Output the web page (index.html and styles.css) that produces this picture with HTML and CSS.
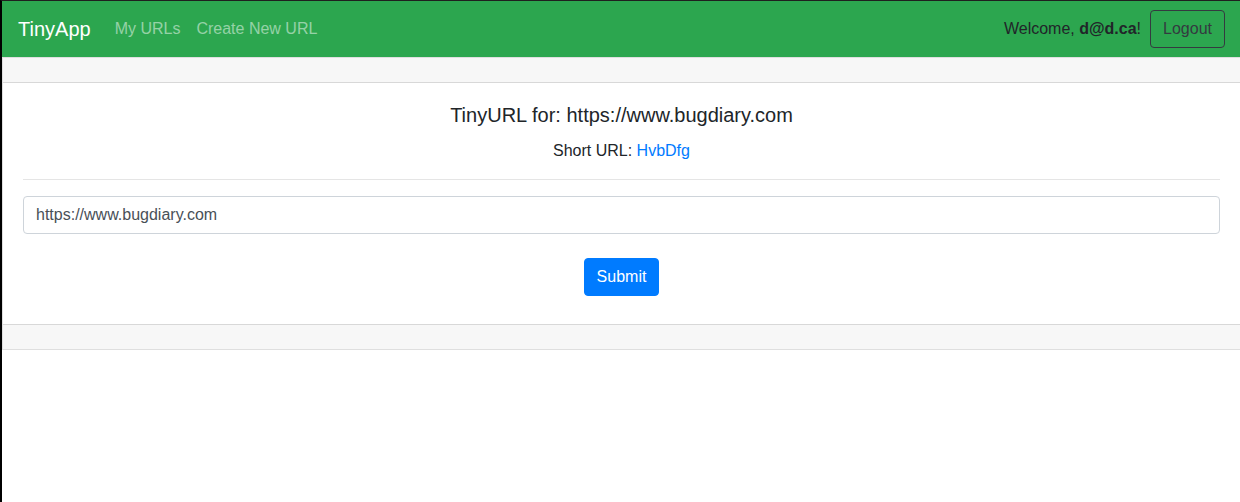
FILE: index.html
```html
<!DOCTYPE html>
<html>
<head>
<meta charset="utf-8">
<title>TinyApp</title>
<link rel="stylesheet" href="styles.css">
</head>
<body>
<nav class="navbar">
  <a class="brand" href="#">TinyApp</a>
  <div class="nav-links">
    <a class="nav-link" href="#">My URLs</a>
    <a class="nav-link" href="#">Create New URL</a>
  </div>
  <div class="nav-right">
    <span class="welcome">Welcome, <b>d@d.ca</b>!</span>
    <button class="btn-outline">Logout</button>
  </div>
</nav>
<main class="card">
  <div class="card-header"></div>
  <div class="card-body">
    <h5 class="card-title">TinyURL for: https://www.bugdiary.com</h5>
    <p class="card-text">Short URL: <a href="#">HvbDfg</a></p>
    <hr class="divider">
    <form class="edit-form">
      <div class="form-group">
        <input class="form-control" type="text" value="https://www.bugdiary.com">
      </div>
      <div class="submit-row">
        <button class="btn-primary" type="submit">Submit</button>
      </div>
    </form>
  </div>
  <div class="card-footer"></div>
</main>
</body>
</html>
```
FILE: styles.css
```css
* { box-sizing: border-box; }
html { height: 100%; overflow: hidden; }
body {
  margin: 0;
  width: 1241px;
  min-height: 100%;
  font-family: "Liberation Sans", Arial, sans-serif;
  font-size: 16px;
  line-height: 1.5;
  color: #212529;
  background: #fff;
  border-left: 2px solid #000;
  border-top: 1px solid #1f1f1f;
}
.navbar {
  display: flex;
  align-items: center;
  height: 56px;
  padding: 0 16px;
  background: #2ca64f;
}
.brand {
  font-size: 20px;
  line-height: 30px;
  color: #fff;
  text-decoration: none;
  margin-right: 16px;
}
.nav-links { display: flex; }
.nav-link {
  padding: 8px;
  color: rgba(255,255,255,.5);
  text-decoration: none;
}
.nav-right {
  margin-left: auto;
  display: flex;
  align-items: center;
}
.welcome { margin-right: 9px; color: #212529; }
.welcome b { font-weight: 700; }
.btn-outline {
  font-family: inherit;
  font-size: 16px;
  line-height: 24px;
  padding: 6px 12px;
  height: 38px;
  background: transparent;
  color: #343a40;
  border: 1px solid #343a40;
  border-radius: 4px;
}
.card {
  display: block;
  border: 1px solid rgba(0,0,0,.125);
  background: #fff;
}
.card-header {
  height: 25px;
  background: rgba(0,0,0,.03);
  border-bottom: 1px solid rgba(0,0,0,.125);
}
.card-body {
  padding: 20px;
  text-align: center;
}
.card-title {
  margin: 0 0 12px;
  font-size: 20px;
  font-weight: 500;
  line-height: 24px;
}
.card-text { margin: 0 0 16px; }
.card-text a { color: #007bff; text-decoration: none; }
.divider {
  margin: 16px 0;
  border: 0;
  border-top: 1px solid rgba(0,0,0,.1);
}
.edit-form { margin: 0; }
.form-group { margin-bottom: 16px; }
.form-control {
  display: block;
  width: 100%;
  height: 38px;
  padding: 6px 12px;
  font-family: inherit;
  font-size: 16px;
  line-height: 24px;
  color: #495057;
  border: 1px solid #ced4da;
  border-radius: 4px;
  background: #fff;
}
.submit-row { padding: 8px 0; }
.btn-primary {
  font-family: inherit;
  font-size: 16px;
  line-height: 24px;
  height: 38px;
  padding: 6px 12px;
  color: #fff;
  background: #007bff;
  border: 1px solid #007bff;
  border-radius: 4px;
}
.card-footer {
  height: 25px;
  background: rgba(0,0,0,.03);
  border-top: 1px solid rgba(0,0,0,.125);
}
```
